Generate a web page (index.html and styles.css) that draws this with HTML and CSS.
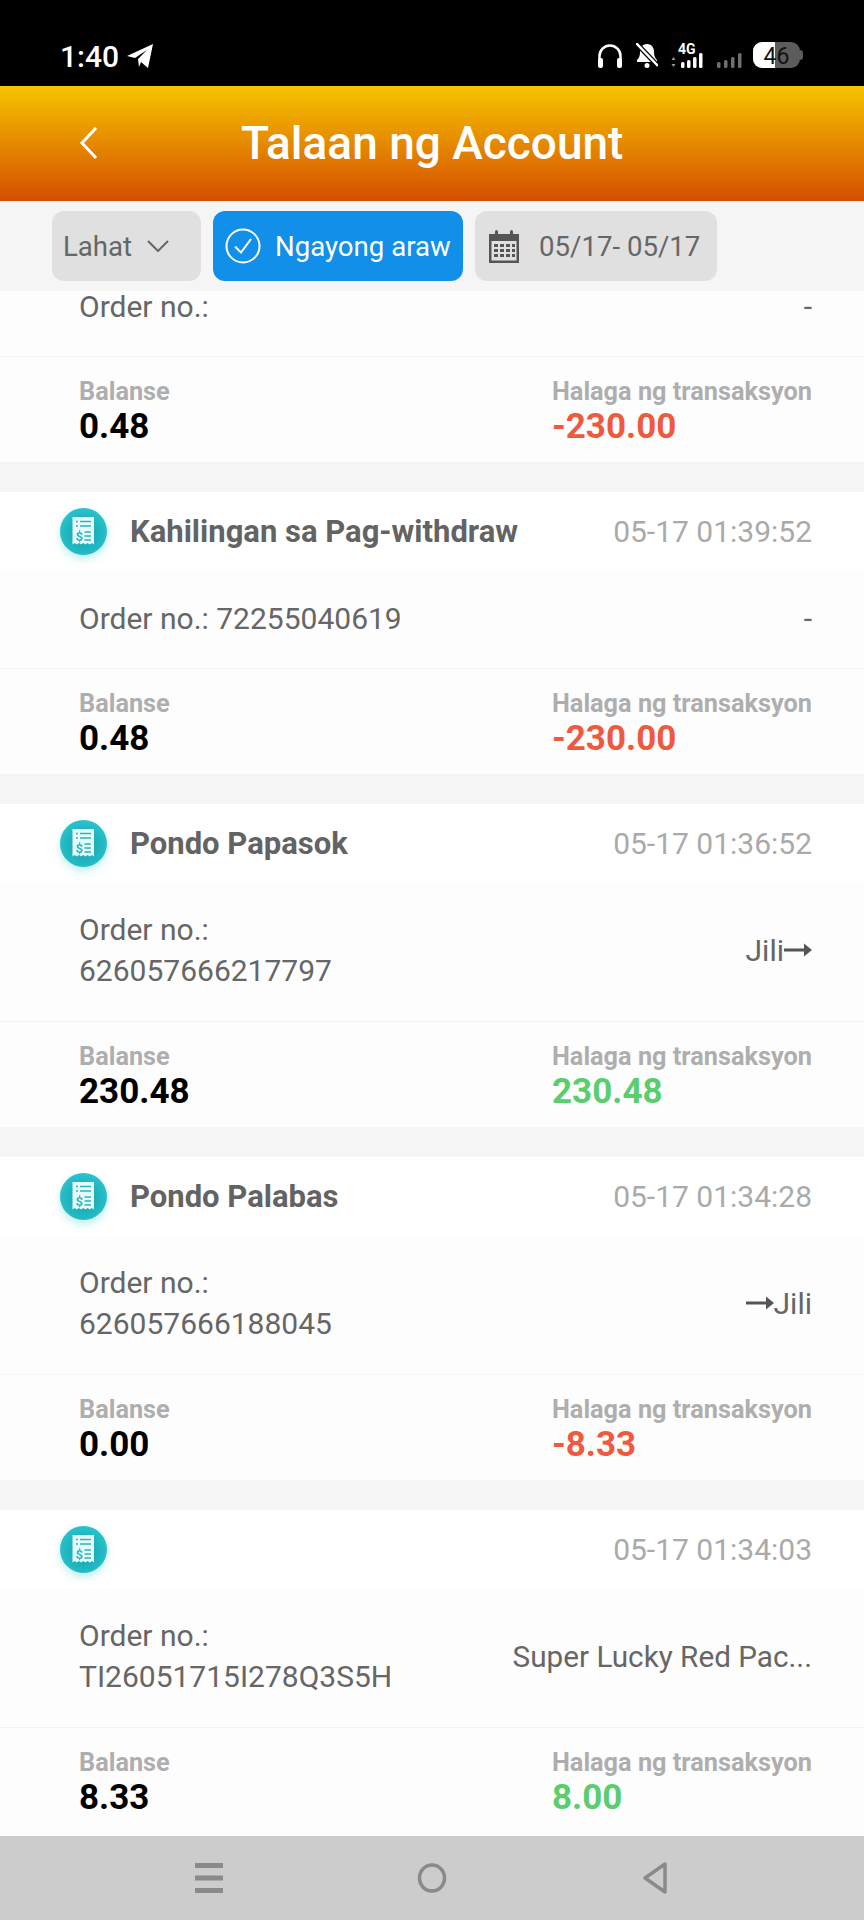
FILE: index.html
```html
<!DOCTYPE html>
<html lang="en">
<head>
  <meta charset="UTF-8" />
  <meta name="viewport" content="width=device-width, initial-scale=1" />
  <title>Talaan ng Account</title>
  <link rel="stylesheet" href="styles.css">
</head>
<body>

<svg class="defs" width="0" height="0">
  <defs>
    <radialGradient id="tealGrad" cx="0.5" cy="0.55" r="0.6">
      <stop offset="0" stop-color="#0f9fab" />
      <stop offset="1" stop-color="#2cc6cf" />
    </radialGradient>
    <symbol id="receipt" viewBox="0 0 47 47">
      <circle cx="23.500" cy="23.500" r="23.500" fill="url(#tealGrad)" />
      <path d="M12.500 9h21.500v27.500l-2.100-1.500-2.200 1.500-2.100-1.500-2.200 1.500-2.100-1.500-2.200 1.500-2.100-1.500-2.200 1.500-2.100-1.500-2.200 1.500z" fill="#e6fafa" />
      <path d="M16 13.500h2M20 13.500h11M16 18h2M20 18h11M24.500 24h6.500M24.500 28h6.500M24.500 32h6.500" stroke="#2ab6bf" stroke-width="1.500" fill="none" />
      <text x="19.500" y="32.500" class="receipt-sign">$</text>
    </symbol>
  </defs>
</svg>

<div class="status-bar">
  <div class="status-left">
    <span class="clock">1:40</span>
    <svg width="28" height="26" viewBox="0 0 28 26"><path d="M1 13 27 1 22 25 15 19 13 24 12 16 21 7 9 15z" fill="#fff" /></svg>
  </div>
  <div class="status-right">
    <svg width="26" height="24" viewBox="0 0 26 24" fill="none" stroke="#fff" stroke-width="2.500"><path d="M2.500 17v-5a10.500 10.500 0 0 1 21 0v5" /><rect x="1" y="14" width="5" height="10" rx="2" fill="#fff" stroke="none" /><rect x="20" y="14" width="5" height="10" rx="2" fill="#fff" stroke="none" /></svg>
    <svg width="22" height="25" viewBox="0 0 22 25"><path d="M11 1c5 0 7 4 7 8 0 4 1 6 3 8v2H1v-2c2-2 3-4 3-8 0-4 2-8 7-8z" fill="#fff" /><circle cx="11" cy="22.500" r="2.500" fill="#fff" /><path d="M0 0l22 23" stroke="#000" stroke-width="5" /><path d="M0 0l22 23" stroke="#fff" stroke-width="2.500" /></svg>
    <div class="signal-wrap">
      <span class="net-label">4G</span>
      <svg width="33" height="15" viewBox="0 0 33 15" fill="#fff"><path d="M2.500 4l2 3h-4zM2.500 14l2-3h-4z" opacity=".6" /><rect x="10" y="9" width="3.500" height="6" rx="1.500" /><rect x="16" y="7" width="3.500" height="8" rx="1.500" /><rect x="22" y="4" width="3.500" height="11" rx="1.500" /><rect x="28" y="0" width="3.500" height="15" rx="1.500" /></svg>
    </div>
    <svg width="25" height="15" viewBox="0 0 25 15" fill="#6f6f6f"><rect x="0" y="9" width="3.500" height="6" rx="1.500" /><rect x="7" y="7" width="3.500" height="8" rx="1.500" /><rect x="14" y="4" width="3.500" height="11" rx="1.500" /><rect x="21" y="0" width="3.500" height="15" rx="1.500" /></svg>
    <div class="battery">
      <div class="battery-body"><span class="battery-fill"></span><span class="battery-num">46</span></div>
      <span class="battery-nub"></span>
    </div>
  </div>
</div>

<header class="app-header">
  <svg class="back-icon" width="20" height="34" viewBox="0 0 20 34" fill="none" stroke="#fff" stroke-width="3"><path d="M17 2 3 17l14 15" /></svg>
  <h1>Talaan ng Account</h1>
</header>

<div class="filter-bar">
  <div class="chip chip-all">
    <span>Lahat</span>
    <svg width="22" height="12" viewBox="0 0 22 12" fill="none" stroke="#666" stroke-width="2"><path d="M1 1l10 10L21 1" /></svg>
  </div>
  <div class="chip chip-active">
    <svg width="36" height="36" viewBox="0 0 36 36" fill="none" stroke="#fff" stroke-width="2"><circle cx="18" cy="18" r="16.500" /><path d="M10 18.500l6 6L26 11" /></svg>
    <span>Ngayong araw</span>
  </div>
  <div class="chip chip-date">
    <svg width="32" height="34" viewBox="0 0 32 34" fill="#555"><path d="M1 5h30v29H1zM3.500 12v19.500h25V12z" fill-rule="evenodd" /><rect x="7" y="1" width="3" height="7" rx="1.500" /><rect x="22" y="1" width="3" height="7" rx="1.500" /><path d="M6 15h4v3H6zM12 15h4v3h-4zM18 15h4v3h-4zM24 15h3v3h-3zM6 20h4v3H6zM12 20h4v3h-4zM18 20h4v3h-4zM24 20h3v3h-3zM6 25h4v3H6zM12 25h4v3h-4zM18 25h4v3h-4zM24 25h3v3h-3z" /></svg>
    <span>05/17- 05/17</span>
  </div>
</div>

<main class="list">
  <section class="card">
    <div class="card-body card-body-cut">
      <span>Order no.:</span>
      <span class="card-extra">-</span>
    </div>
    <div class="card-foot">
      <div><div class="foot-label">Balanse</div><div class="foot-value">0.48</div></div>
      <div class="foot-right"><div class="foot-label">Halaga ng transaksyon</div><div class="foot-value neg">-230.00</div></div>
    </div>
  </section>

  <section class="card">
    <div class="card-head">
      <svg class="receipt-icon" width="47" height="47"><use href="#receipt" /></svg>
      <span class="card-title">Kahilingan sa Pag-withdraw</span>
      <span class="card-time">05-17 01:39:52</span>
    </div>
    <div class="card-body card-body-short">
      <span>Order no.: 72255040619</span>
      <span class="card-extra">-</span>
    </div>
    <div class="card-foot">
      <div><div class="foot-label">Balanse</div><div class="foot-value">0.48</div></div>
      <div class="foot-right"><div class="foot-label">Halaga ng transaksyon</div><div class="foot-value neg">-230.00</div></div>
    </div>
  </section>

  <section class="card">
    <div class="card-head">
      <svg class="receipt-icon" width="47" height="47"><use href="#receipt" /></svg>
      <span class="card-title">Pondo Papasok</span>
      <span class="card-time">05-17 01:36:52</span>
    </div>
    <div class="card-body">
      <span>Order no.:<br>626057666217797</span>
      <span class="card-extra">Jili<svg class="arrow" width="28" height="14" viewBox="0 0 28 14" fill="#555"><path d="M0 5.500h20V.5l8 6.500-8 6.500V8.500H0z" /></svg></span>
    </div>
    <div class="card-foot">
      <div><div class="foot-label">Balanse</div><div class="foot-value">230.48</div></div>
      <div class="foot-right"><div class="foot-label">Halaga ng transaksyon</div><div class="foot-value pos">230.48</div></div>
    </div>
  </section>

  <section class="card">
    <div class="card-head">
      <svg class="receipt-icon" width="47" height="47"><use href="#receipt" /></svg>
      <span class="card-title">Pondo Palabas</span>
      <span class="card-time">05-17 01:34:28</span>
    </div>
    <div class="card-body">
      <span>Order no.:<br>626057666188045</span>
      <span class="card-extra"><svg class="arrow" width="28" height="14" viewBox="0 0 28 14" fill="#555"><path d="M0 5.500h20V.5l8 6.500-8 6.500V8.500H0z" /></svg>Jili</span>
    </div>
    <div class="card-foot">
      <div><div class="foot-label">Balanse</div><div class="foot-value">0.00</div></div>
      <div class="foot-right"><div class="foot-label">Halaga ng transaksyon</div><div class="foot-value neg">-8.33</div></div>
    </div>
  </section>

  <section class="card card-last">
    <div class="card-head">
      <svg class="receipt-icon" width="47" height="47"><use href="#receipt" /></svg>
      <span class="card-title"></span>
      <span class="card-time">05-17 01:34:03</span>
    </div>
    <div class="card-body">
      <span>Order no.:<br>TI26051715I278Q3S5H</span>
      <span class="card-extra card-extra-long">Super Lucky Red Pac...</span>
    </div>
    <div class="card-foot">
      <div><div class="foot-label">Balanse</div><div class="foot-value">8.33</div></div>
      <div class="foot-right"><div class="foot-label">Halaga ng transaksyon</div><div class="foot-value pos">8.00</div></div>
    </div>
  </section>
</main>

<nav class="nav-bar">
  <svg width="30" height="32" viewBox="0 0 30 32" fill="#8a8a8a"><rect x="1" y="1" width="28" height="5" /><rect x="1" y="13.500" width="28" height="5" /><rect x="1" y="26" width="28" height="5" /></svg>
  <svg width="30" height="32" viewBox="0 0 30 32" fill="none" stroke="#8a8a8a" stroke-width="3.500"><ellipse cx="15" cy="16" rx="12.500" ry="13" /></svg>
  <svg width="30" height="34" viewBox="0 0 30 34" fill="none" stroke="#8a8a8a" stroke-width="3.500" stroke-linejoin="round"><path d="M25 3v28L5 17z" /></svg>
</nav>

</body>
</html>
```

FILE: styles.css
```css
* {
  box-sizing: border-box;
}
html, body {
  margin: 0;
  height: 1920px;
  overflow: hidden;
}
body {
  display: flex;
  flex-direction: column;
  background: #f5f5f5;
  font-family: Roboto, "Liberation Sans", sans-serif;
  color: #666;
}
.defs {
  position: absolute;
}
.receipt-sign {
  font-family: Roboto, sans-serif;
  font-size: 13px;
  font-weight: 700;
  fill: #2ab6bf;
  text-anchor: middle;
}

/* status bar */
.status-bar {
  height: 86px;
  flex: none;
  background: #000;
  display: flex;
  justify-content: space-between;
  align-items: flex-start;
  padding: 41px 61px 0 60px;
}
.status-left {
  display: flex;
  align-items: center;
  gap: 7px;
  height: 30px;
}
.clock {
  color: #fff;
  font-size: 30px;
  font-weight: 500;
}
.status-right {
  display: flex;
  align-items: flex-end;
  gap: 13px;
  height: 27px;
}
.signal-wrap {
  position: relative;
  width: 33px;
  height: 24px;
  display: flex;
  align-items: flex-end;
}
.net-label {
  position: absolute;
  top: -1px;
  left: 7px;
  color: #fff;
  font-size: 14px;
  line-height: 12px;
  font-weight: 700;
}
.battery {
  display: flex;
  align-items: center;
  margin-left: -2px;
}
.battery-body {
  position: relative;
  width: 47px;
  height: 26px;
  border-radius: 9px;
  background: #5c5c5c;
  text-align: center;
}
.battery-nub {
  width: 3px;
  height: 10px;
  border-radius: 0 3px 3px 0;
  background: #5c5c5c;
}
.battery-fill {
  display: block;
  width: 22px;
  height: 100%;
  border-radius: 9px 0 0 9px;
  background: #fff;
}
.battery-num {
  position: absolute;
  left: 0;
  right: 0;
  top: 2px;
  line-height: 26px;
  font-size: 23px;
  color: #111;
}

/* header */
.app-header {
  height: 115px;
  flex: none;
  background: linear-gradient(#f6c400, #d54e00);
  display: flex;
  align-items: center;
  padding: 0 0 2px 79px;
}
.app-header h1 {
  margin: 0 0 0 142px;
  color: #fff;
  font-size: 46px;
  font-weight: 500;
}

/* filter chips */
.filter-bar {
  height: 90px;
  flex: none;
  display: flex;
  align-items: flex-start;
  gap: 12px;
  padding: 10px 0 0 52px;
  background: #f5f5f5;
}
.chip {
  height: 70px;
  border-radius: 12px;
  display: flex;
  align-items: center;
  background: #e0e0e0;
  font-size: 27.6px;
  color: #666;
}
.chip-all {
  width: 149px;
  padding-left: 11px;
  gap: 15px;
}
.chip-active {
  width: 250px;
  padding-left: 12px;
  gap: 14px;
  background: #128fe9;
  color: #fff;
}
.chip-date {
  width: 242px;
  padding-left: 13px;
  gap: 19px;
}

/* records */
.list {
  flex: 1;
  display: flex;
  flex-direction: column;
  gap: 30px;
  min-height: 0;
}
.card {
  flex: none;
  background: #fff;
}
.card-last {
  flex: 1;
  background: #fdfdfd;
}
.card-head {
  height: 78px;
  display: flex;
  align-items: center;
  padding: 0 52px 0 60px;
  background: #fff;
}
.receipt-icon {
  flex: none;
  margin-right: 23px;
  filter: drop-shadow(0 4px 4px rgba(40, 195, 203, 0.3));
}
.card-title {
  flex: 1;
  font-size: 31px;
  font-weight: 700;
  color: #636363;
}
.card-time {
  font-size: 30px;
  color: #aaa;
}
.card-body {
  height: 140px;
  display: flex;
  justify-content: space-between;
  align-items: center;
  padding: 0 52px 3px 79px;
  font-size: 30px;
  line-height: 41px;
  color: #666;
  background: #fdfdfd;
  border-bottom: 1px solid #f3f3f3;
}
.card-body-short {
  height: 99px;
  padding-bottom: 2px;
}
.card-body-cut {
  height: 66px;
  align-items: flex-start;
  padding-bottom: 0;
  line-height: 31px;
}
.card-extra {
  display: flex;
  align-items: center;
}
.card-extra-long {
  font-size: 29.7px;
}
.arrow {
  flex: none;
}
.card-foot {
  height: 105px;
  display: flex;
  justify-content: space-between;
  padding: 20px 52px 0 79px;
  background: #fdfdfd;
}
.foot-right {
  text-align: right;
}
.foot-label {
  font-size: 25.3px;
  line-height: 30px;
  font-weight: 700;
  color: #aeaeae;
}
.foot-value {
  font-size: 35px;
  line-height: 40px;
  font-weight: 700;
  color: #000;
  text-align: left;
}
.neg {
  color: #ee5a3f;
}
.pos {
  color: #5ccd6f;
}

/* android nav */
.nav-bar {
  height: 84px;
  flex: none;
  background: #cccccc;
  display: flex;
  justify-content: center;
  align-items: center;
  gap: 193px;
}
```
